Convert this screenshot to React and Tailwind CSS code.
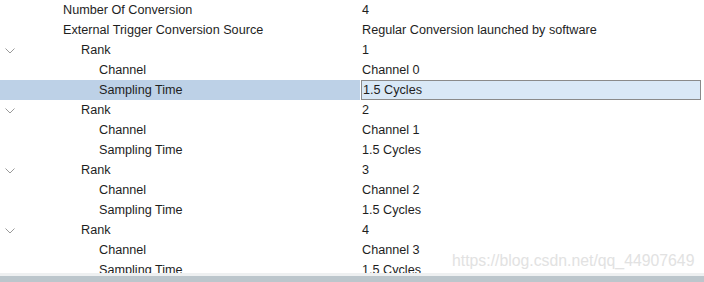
import React from "react";

const rows = [
  { label: "Number Of Conversion", value: "4", indent: 0 },
  { label: "External Trigger Conversion Source", value: "Regular Conversion launched by software", indent: 0 },
  { label: "Rank", value: "1", indent: 1, chevron: true },
  { label: "Channel", value: "Channel 0", indent: 2 },
  { label: "Sampling Time", value: "1.5 Cycles", indent: 2, selected: true },
  { label: "Rank", value: "2", indent: 1, chevron: true },
  { label: "Channel", value: "Channel 1", indent: 2 },
  { label: "Sampling Time", value: "1.5 Cycles", indent: 2 },
  { label: "Rank", value: "3", indent: 1, chevron: true },
  { label: "Channel", value: "Channel 2", indent: 2 },
  { label: "Sampling Time", value: "1.5 Cycles", indent: 2 },
  { label: "Rank", value: "4", indent: 1, chevron: true },
  { label: "Channel", value: "Channel 3", indent: 2 },
  { label: "Sampling Time", value: "1.5 Cycles", indent: 2 },
];

const indentCls = ["pl-[63px]", "pl-[81px]", "pl-[99px]"];

function Chevron() {
  return (
    <svg width="10" height="6" viewBox="0 0 10 6" className="absolute left-[5px] top-[8px]">
      <path d="M0.5 0.5 L5 5 L9.5 0.5" fill="none" stroke="#9a9a9a" strokeWidth="1" />
    </svg>
  );
}

export default function App() {
  return (
    <div
      className="relative w-[704px] h-[282px] bg-white overflow-hidden flex flex-col text-[12.65px] text-[#1e1e1e]"
      style={{ fontFamily: '"Liberation Sans", Arial, sans-serif' }}
    >
      <div className="h-[273px] overflow-hidden flex flex-col">
        {rows.map((r, i) => (
          <div key={i} className="flex h-5 shrink-0 items-stretch">
            <div
              className={`relative w-[360px] shrink-0 flex items-center pt-[1px] ${indentCls[r.indent]} ${
                r.selected ? "bg-[#bdd1e7]" : ""
              }`}
            >
              {r.chevron && <Chevron />}
              <span className="leading-none">{r.label}</span>
            </div>
            {r.selected ? (
              <div className="ml-[1px] w-[340px] flex items-center pt-[1px] border border-[#8a8a8a] bg-[#d9e8f6] pl-[1px]">
                <span className="leading-none">{r.value}</span>
              </div>
            ) : (
              <div className="pl-[2px] pt-[1px] flex items-center">
                <span className="leading-none">{r.value}</span>
              </div>
            )}
          </div>
        ))}
      </div>
      <div className="h-[3px] bg-[#eef0f1]" />
      <div className="flex-1 bg-[#bcc6cc]" />
      <div className="absolute left-[452px] top-[253px] text-[15.8px] text-[#e2e2e2] leading-none whitespace-nowrap">
        https://blog.csdn.net/qq_44907649
      </div>
    </div>
  );
}
